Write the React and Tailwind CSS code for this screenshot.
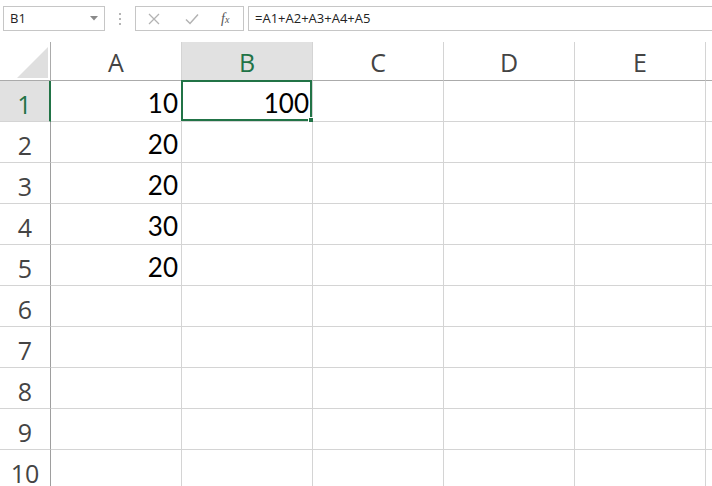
import React from "react";

const cols = ["A", "B", "C", "D", "E", ""];
const values = { 1: ["10", "100"], 2: ["20"], 3: ["20"], 4: ["30"], 5: ["20"] };
const rows = [1, 2, 3, 4, 5, 6, 7, 8, 9, 10];

function Toolbar() {
  return (
    <div className="flex items-center h-[25px] mt-[6px] text-[13px] text-[#222]" style={{ fontFamily: '"Open Sans", sans-serif' }}>
      <div className="ml-[3px] w-[102px] h-full border border-[#c6c6c6] flex items-center justify-between pl-[6px] pr-[6px]">
        <span>B1</span>
        <svg width="8" height="5" viewBox="0 0 8 5"><path d="M0 0h8L4 4.5z" fill="#8a8a8a" /></svg>
      </div>
      <div className="w-[30px] flex flex-col items-center gap-[3px]">
        <span className="w-[2px] h-[2px] bg-[#b5b5b5]" />
        <span className="w-[2px] h-[2px] bg-[#b5b5b5]" />
        <span className="w-[2px] h-[2px] bg-[#b5b5b5]" />
      </div>
      <div className="w-[109px] h-full border border-[#c6c6c6] flex items-center">
        <svg className="ml-[12px]" width="12" height="12" viewBox="0 0 12 12">
          <path d="M1 1l10 10M11 1L1 11" stroke="#b3b3b3" strokeWidth="1.3" />
        </svg>
        <svg className="ml-[25px]" width="14" height="12" viewBox="0 0 14 12">
          <path d="M1 6.5l4 4L13 1.5" stroke="#b3b3b3" strokeWidth="1.5" fill="none" />
        </svg>
        <span className="ml-[22px] italic text-[#555] text-[14px]" style={{ fontFamily: '"Liberation Serif", serif' }}>
          f<span className="text-[10px]">x</span>
        </span>
      </div>
      <div className="ml-[4px] flex-1 h-full border border-r-0 border-[#c6c6c6] flex items-center pl-[6px]">
        =A1+A2+A3+A4+A5
      </div>
    </div>
  );
}

export default function App() {
  return (
    <div className="w-[712px] h-[486px] overflow-hidden bg-white">
      <Toolbar />
      <div className="mt-[11px] grid grid-cols-[51px_repeat(6,131px)] auto-rows-[41px] grid-rows-[39px]" style={{ fontFamily: '"Open Sans", sans-serif' }}>
        <div className="relative border-r border-b border-[#ababab]">
          <svg className="absolute left-[17px] top-[5px]" width="31" height="31" viewBox="0 0 31 31">
            <path d="M31 0V31H0z" fill="#dfdfdf" />
          </svg>
        </div>
        {cols.map((c, i) => (
          <div
            key={i}
            className={
              "flex items-center justify-center pt-[4px] text-[25px] border-b border-r " +
              (c === "B"
                ? "bg-[#e1e1e1] text-[#217346] border-b-[#ababab] border-r-[#d4d4d4]"
                : "text-[#444] border-b-[#ababab] border-r-[#d4d4d4]")
            }
          >
            {c}
          </div>
        ))}
        {rows.map((r) => (
          <React.Fragment key={r}>
            <div
              className={
                "flex items-center justify-center pt-[6px] leading-none text-[25px] border-b border-[#d4d4d4] " +
                (r === 1
                  ? "bg-[#e1e1e1] text-[#217346] border-r-2 border-r-[#217346]"
                  : "text-[#444] border-r border-r-[#9e9e9e]")
              }
            >
              {r}
            </div>
            {cols.map((c, i) => {
              const v = values[r] && values[r][i];
              const selected = r === 1 && c === "B";
              return (
                <div
                  key={i}
                  className="relative flex items-end justify-end pr-[3px] pb-[5px] leading-none text-[26px] text-black border-r border-b border-[#d4d4d4]"
                  style={{ fontFamily: "Lato, sans-serif" }}
                >
                  {v}
                  {selected && (
                    <div className="absolute -left-[1px] -top-[1px] right-0 bottom-0 border-2 border-[#217346]">
                      <div className="absolute -right-[4px] -bottom-[4px] w-[6px] h-[6px] bg-[#217346] border border-white" />
                    </div>
                  )}
                </div>
              );
            })}
          </React.Fragment>
        ))}
      </div>
    </div>
  );
}
